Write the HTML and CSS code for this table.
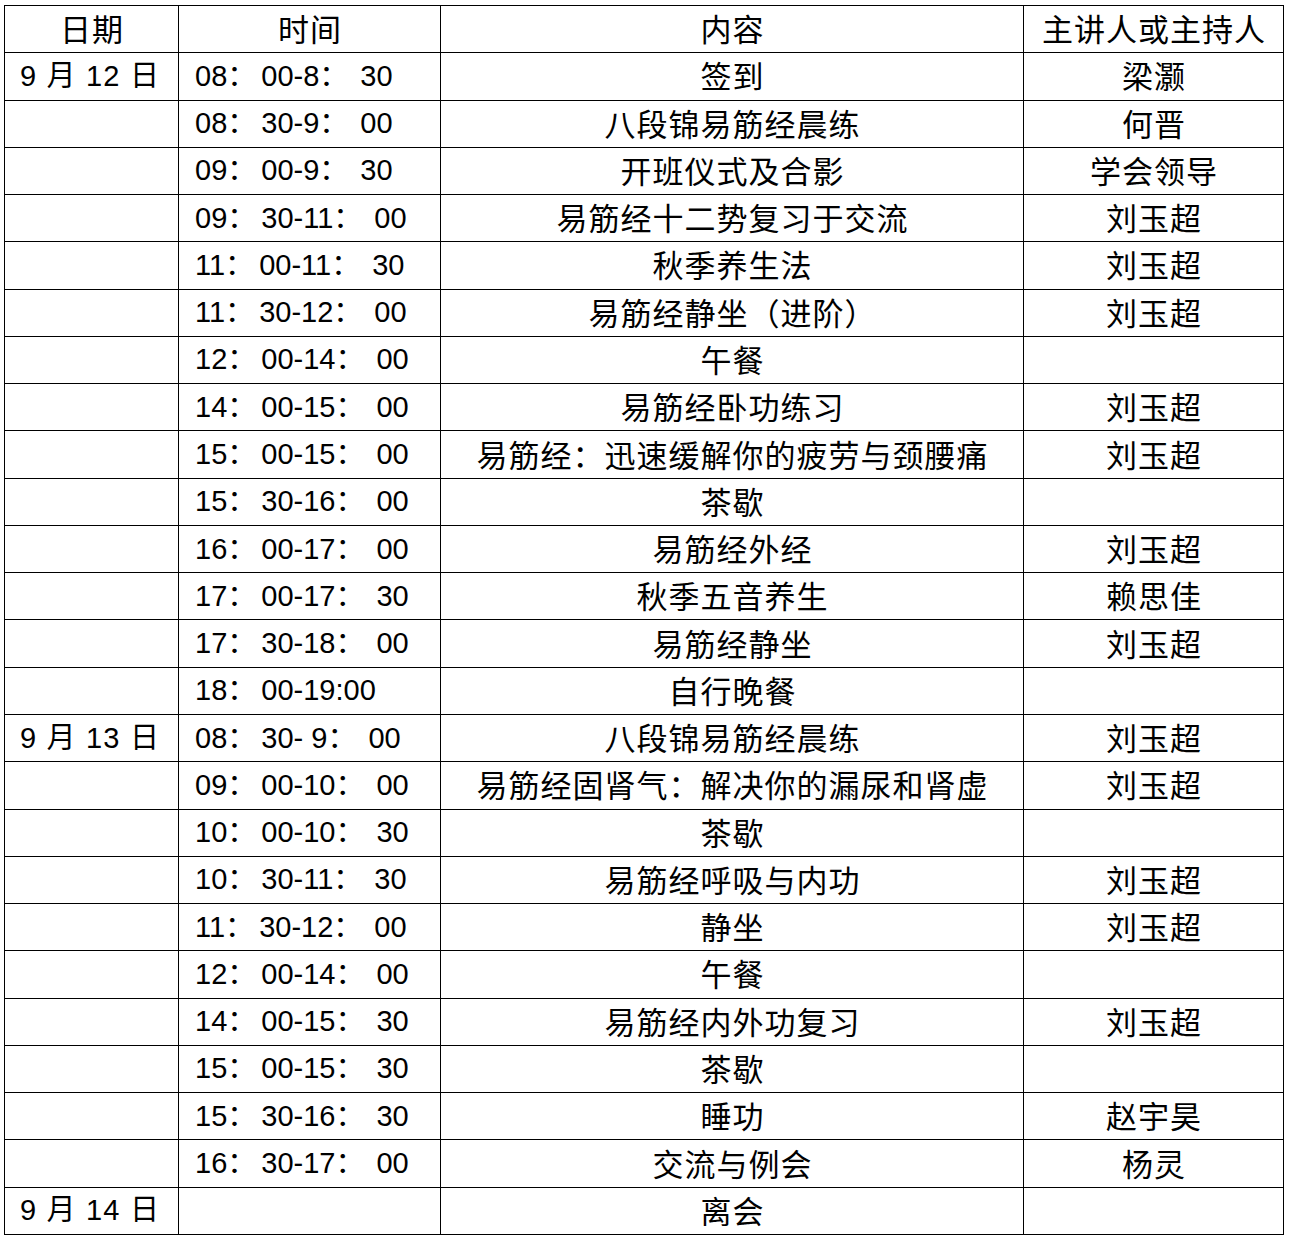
FILE: index.html
```html
<!DOCTYPE html>
<html lang="zh-CN">
<head>
<meta charset="utf-8">
<title>日程安排</title>
<link rel="stylesheet" href="styles.css">
</head>
<body>
<table class="schedule">
<colgroup>
<col class="c-date"><col class="c-time"><col class="c-content"><col class="c-host">
</colgroup>
<thead>
<tr><th>日期</th><th>时间</th><th>内容</th><th>主讲人或主持人</th></tr>
</thead>
<tbody>
<tr><td class="date">9 月 12 日</td><td class="time">08<span class="cl1">：</span>00-8<span class="cl2">：</span>30</td><td>签到</td><td>梁灏</td></tr>
<tr><td class="date"></td><td class="time">08<span class="cl1">：</span>30-9<span class="cl2">：</span>00</td><td>八段锦易筋经晨练</td><td>何晋</td></tr>
<tr><td class="date"></td><td class="time">09<span class="cl1">：</span>00-9<span class="cl2">：</span>30</td><td>开班仪式及合影</td><td>学会领导</td></tr>
<tr><td class="date"></td><td class="time">09<span class="cl1">：</span>30-11<span class="cl2">：</span>00</td><td>易筋经十二势复习于交流</td><td>刘玉超</td></tr>
<tr><td class="date"></td><td class="time">11<span class="cl1">：</span>00-11<span class="cl2">：</span>30</td><td>秋季养生法</td><td>刘玉超</td></tr>
<tr><td class="date"></td><td class="time">11<span class="cl1">：</span>30-12<span class="cl2">：</span>00</td><td>易筋经静坐（进阶）</td><td>刘玉超</td></tr>
<tr><td class="date"></td><td class="time">12<span class="cl1">：</span>00-14<span class="cl2">：</span>00</td><td>午餐</td><td></td></tr>
<tr><td class="date"></td><td class="time">14<span class="cl1">：</span>00-15<span class="cl2">：</span>00</td><td>易筋经卧功练习</td><td>刘玉超</td></tr>
<tr><td class="date"></td><td class="time">15<span class="cl1">：</span>00-15<span class="cl2">：</span>00</td><td>易筋经：迅速缓解你的疲劳与颈腰痛</td><td>刘玉超</td></tr>
<tr><td class="date"></td><td class="time">15<span class="cl1">：</span>30-16<span class="cl2">：</span>00</td><td>茶歇</td><td></td></tr>
<tr><td class="date"></td><td class="time">16<span class="cl1">：</span>00-17<span class="cl2">：</span>00</td><td>易筋经外经</td><td>刘玉超</td></tr>
<tr><td class="date"></td><td class="time">17<span class="cl1">：</span>00-17<span class="cl2">：</span>30</td><td>秋季五音养生</td><td>赖思佳</td></tr>
<tr><td class="date"></td><td class="time">17<span class="cl1">：</span>30-18<span class="cl2">：</span>00</td><td>易筋经静坐</td><td>刘玉超</td></tr>
<tr><td class="date"></td><td class="time">18<span class="cl1">：</span>00-19:00</td><td>自行晚餐</td><td></td></tr>
<tr><td class="date">9 月 13 日</td><td class="time">08<span class="cl1">：</span>30- 9<span class="cl2">：</span>00</td><td>八段锦易筋经晨练</td><td>刘玉超</td></tr>
<tr><td class="date"></td><td class="time">09<span class="cl1">：</span>00-10<span class="cl2">：</span>00</td><td>易筋经固肾气：解决你的漏尿和肾虚</td><td>刘玉超</td></tr>
<tr><td class="date"></td><td class="time">10<span class="cl1">：</span>00-10<span class="cl2">：</span>30</td><td>茶歇</td><td></td></tr>
<tr><td class="date"></td><td class="time">10<span class="cl1">：</span>30-11<span class="cl2">：</span>30</td><td>易筋经呼吸与内功</td><td>刘玉超</td></tr>
<tr><td class="date"></td><td class="time">11<span class="cl1">：</span>30-12<span class="cl2">：</span>00</td><td>静坐</td><td>刘玉超</td></tr>
<tr><td class="date"></td><td class="time">12<span class="cl1">：</span>00-14<span class="cl2">：</span>00</td><td>午餐</td><td></td></tr>
<tr><td class="date"></td><td class="time">14<span class="cl1">：</span>00-15<span class="cl2">：</span>30</td><td>易筋经内外功复习</td><td>刘玉超</td></tr>
<tr><td class="date"></td><td class="time">15<span class="cl1">：</span>00-15<span class="cl2">：</span>30</td><td>茶歇</td><td></td></tr>
<tr><td class="date"></td><td class="time">15<span class="cl1">：</span>30-16<span class="cl2">：</span>30</td><td>睡功</td><td>赵宇昊</td></tr>
<tr><td class="date"></td><td class="time">16<span class="cl1">：</span>30-17<span class="cl2">：</span>00</td><td>交流与例会</td><td>杨灵</td></tr>
<tr><td class="date">9 月 14 日</td><td class="time"></td><td>离会</td><td></td></tr>
</tbody>
</table>
</body>
</html>
```
FILE: styles.css
```css
html, body {
  margin: 0;
  padding: 0;
  background: #fff;
}
body {
  padding: 5px 0 0 4px;
}
.schedule {
  border-collapse: collapse;
  table-layout: fixed;
  width: 1279px;
  color: #000;
  font-family: "Noto Sans CJK SC", "Noto Sans", sans-serif;
  font-size: 31px;
}
.c-date { width: 174px; }
.c-time { width: 262px; }
.c-content { width: 583px; }
.c-host { width: 260px; }
.schedule tr {
  height: 47.27px;
}
.schedule th,
.schedule td {
  border: 1px solid #000;
  padding: 0 0 3px 1px;
  text-align: center;
  vertical-align: middle;
  font-weight: normal;
  letter-spacing: 1px;
  line-height: 1;
  white-space: nowrap;
}
.schedule td.date {
  text-align: left;
  padding: 0 0 0 15px;
  font-family: "Liberation Sans", "Noto Sans CJK SC", sans-serif;
  font-size: 29px;
  letter-spacing: 1.2px;
}
.schedule td.time {
  text-align: left;
  padding: 0 0 0 16px;
  font-family: "Liberation Sans", "Noto Sans CJK SC", sans-serif;
  font-size: 29px;
  letter-spacing: 0;
}
.schedule td.time .cl1 {
  letter-spacing: 5px;
}
.schedule td.time .cl2 {
  letter-spacing: 12px;
}
```
